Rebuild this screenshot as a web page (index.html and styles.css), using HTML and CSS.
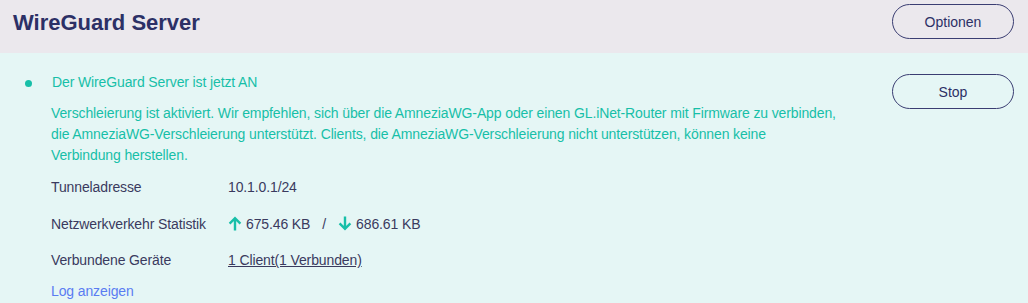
FILE: index.html
```html
<!DOCTYPE html>
<html lang="de">
<head>
<meta charset="utf-8">
<link rel="stylesheet" href="styles.css">
</head>
<body>
<div class="page">
  <header class="header">
    <h1 class="title">WireGuard Server</h1>
    <button class="btn">Optionen</button>
  </header>
  <section class="panel">
    <div class="status-row">
      <div class="status">
        <div class="status-line"><span class="dot"></span><span class="status-text">Der WireGuard Server ist jetzt AN</span></div>
        <p class="notice">Verschleierung ist aktiviert. Wir empfehlen, sich über die AmneziaWG-App oder einen GL.iNet-Router mit Firmware zu verbinden, die AmneziaWG-Verschleierung unterstützt. Clients, die AmneziaWG-Verschleierung nicht unterstützen, können keine<br>Verbindung herstellen.</p>
      </div>
      <button class="btn btn-stop">Stop</button>
    </div>
    <dl class="info">
      <div class="info-row"><dt>Tunneladresse</dt><dd>10.1.0.1/24</dd></div>
      <div class="info-row"><dt>Netzwerkverkehr Statistik</dt><dd class="traffic">
        <svg class="arrow" width="14" height="15" viewBox="0 0 14 15"><path d="M7 14.5V2.2M1.6 7.6L7 2.2l5.4 5.4" fill="none" stroke="#17bfa8" stroke-width="2.4"/></svg>
        <span>675.46 KB</span><span class="sep">/</span>
        <svg class="arrow" width="14" height="15" viewBox="0 0 14 15"><path d="M7 0.5v12.3M1.6 7.4L7 12.8l5.4-5.4" fill="none" stroke="#17bfa8" stroke-width="2.4"/></svg>
        <span>686.61 KB</span></dd></div>
      <div class="info-row"><dt>Verbundene Geräte</dt><dd><a class="clients" href="#">1 Client(1 Verbunden)</a></dd></div>
    </dl>
    <a class="log" href="#">Log anzeigen</a>
  </section>
</div>
</body>
</html>
```

FILE: styles.css
```css
* { box-sizing: border-box; }
html, body { margin: 0; padding: 0; }
body {
  font-family: "Liberation Sans", Arial, sans-serif;
  background: #e5f6f5;
  width: 1028px;
  height: 303px;
  overflow: hidden;
}
.header {
  height: 53px;
  background: #ebe8ed;
  display: flex;
  align-items: flex-start;
  justify-content: space-between;
  padding: 4px 14px 0 13px;
}
.title {
  margin: 6px 0 0;
  font-size: 22px;
  font-weight: bold;
  color: #2c3066;
  line-height: 26px;
}
.btn {
  width: 122px;
  height: 35px;
  border: 1.5px solid #3a3d72;
  border-radius: 18px;
  background: transparent;
  color: #2c3066;
  font-family: "Liberation Sans", Arial, sans-serif;
  font-size: 14px;
  padding: 0;
}
.panel {
  padding: 20px 14px 0 24px;
  letter-spacing: -0.12px;
}
.status-row {
  display: flex;
  justify-content: space-between;
  align-items: flex-start;
}
.status-line {
  display: flex;
  align-items: center;
  height: 17px;
}
.dot {
  width: 7px;
  height: 7px;
  border-radius: 50%;
  background: #17bfa8;
  margin: 4px 20px 0 1px;
}
.status-text, .notice {
  color: #17bfa8;
  font-size: 14px;
}
.notice {
  margin: 13px 0 0 27px;
  line-height: 21px;
  width: 792px;
}
.btn-stop { margin-top: 1px; letter-spacing: 0; }
.info {
  margin: 3px 0 0 27px;
}
.info-row {
  display: flex;
  align-items: center;
  height: 36.5px;
  color: #3a3a5e;
  font-size: 14px;
}
.info-row dt { width: 177px; }
.info-row dd { margin: 0; display: flex; align-items: center; }
.traffic .arrow { margin-right: 4px; }
.sep { margin: 0 12px; }
.clients { color: #3a3a5e; }
.log {
  display: block;
  margin: 4px 0 0 27px;
  color: #5a7cf2;
  font-size: 14px;
  text-decoration: none;
}
```
